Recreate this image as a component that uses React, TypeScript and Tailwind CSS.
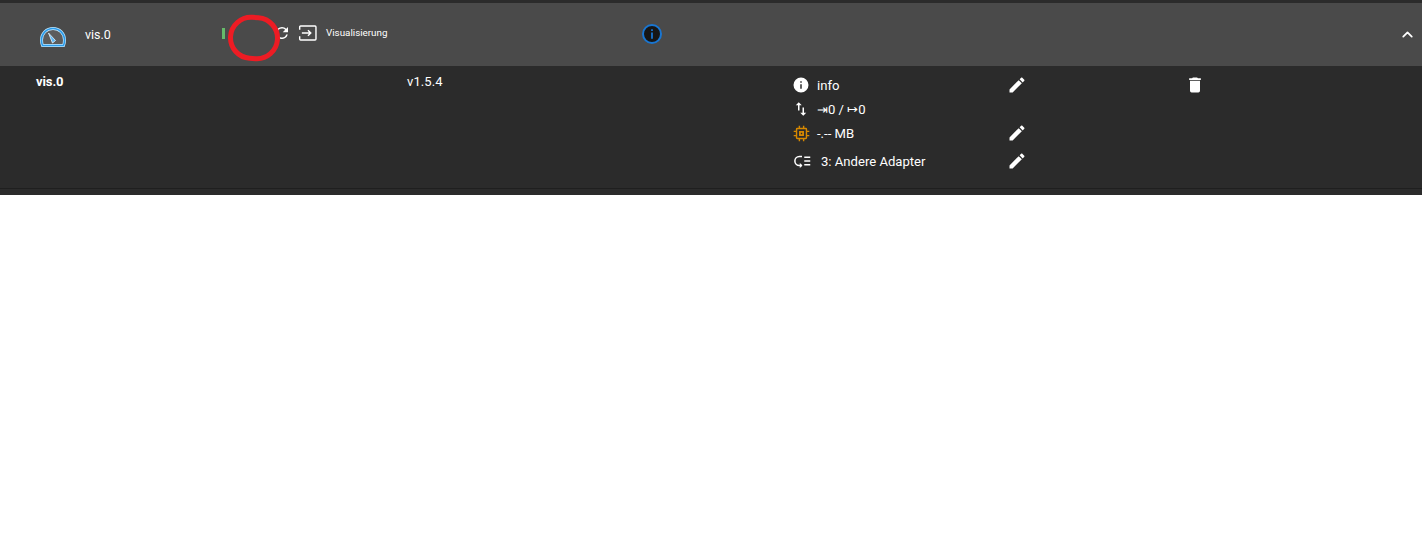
import React from 'react';
import { ChevronUp } from 'lucide-react';

const mdi = {
  info: 'M13 9h-2V7h2m0 10h-2v-6h2m-1-9A10 10 0 0 0 2 12a10 10 0 0 0 10 10 10 10 0 0 0 10-10A10 10 0 0 0 12 2Z',
  pencil: 'M20.71 7.04c.39-.39.39-1.04 0-1.41l-2.34-2.34c-.37-.39-1.02-.39-1.41 0l-1.84 1.83 3.75 3.75M3 17.25V21h3.75L17.81 9.93l-3.75-3.75L3 17.25Z',
  trash: 'M19 4h-3.5l-1-1h-5l-1 1H5v2h14M6 19a2 2 0 0 0 2 2h8a2 2 0 0 0 2-2V7H6v12Z',
  swap: 'M9 3 5 7h3v7h2V7h3L9 3Zm7 14v-7h-2v7h-3l4 4 4-4h-3Z',
  chip: 'M6 4h12a2 2 0 0 1 2 2v12a2 2 0 0 1-2 2H6a2 2 0 0 1-2-2V6a2 2 0 0 1 2-2Zm0 2.500v11a.5.5 0 0 0 .5.5h11a.5.5 0 0 0 .5-.5v-11a.5.5 0 0 0-.5-.5h-11a.5.5 0 0 0-.5.5ZM8.500 8.500h7v7h-7v-7Zm2.500 2.500v2h2v-2h-2ZM8 1h2v3H8V1Zm6 0h2v3h-2V1ZM8 20h2v3H8v-3Zm6 0h2v3h-2v-3ZM1 8h3v2H1V8Zm0 6h3v2H1v-2Zm19-6h3v2h-3V8Zm0 6h3v2h-3v-2Z',
  sync: 'M17.65 6.35A7.96 7.96 0 0 0 12 4a8 8 0 1 0 7.73 10h-2.08A6 6 0 1 1 12 6c1.66 0 3.14.69 4.22 1.78L13 11h7V4l-2.35 2.35Z',
};

const Icon = ({ d, className }: { d: string; className: string }) => (
  <svg viewBox="0 0 24 24" fill="currentColor" className={className}>
    <path d={d} />
  </svg>
);

const Gauge = () => (
  <svg viewBox="0 0 26 20" className="w-[26px] h-5" fill="none">
    <path d="M2.500 18.500h21c1-2 1-4 1-5.500C24.500 6.500 19.500 1.500 13 1.500S1.500 6.500 1.500 13c0 1.500 0 3.500 1 5.500Z" stroke="#bfe6fd" strokeWidth="3" />
    <path d="M2.500 18.500h21c1-2 1-4 1-5.500C24.500 6.500 19.500 1.500 13 1.500S1.500 6.500 1.500 13c0 1.500 0 3.500 1 5.500Z" fill="#ffffff" fillOpacity="0.1" stroke="#2b9bea" strokeWidth="1.600" />
    <path d="M8.500 6l7 7.500-3 2.500Z" fill="#5db6f2" stroke="#e6f5ff" strokeWidth="0.800" />
  </svg>
);

const Exit = () => (
  <svg viewBox="0 0 20 17" className="w-[19px] h-4" fill="none" stroke="currentColor" strokeWidth="1.500">
    <path d="M1.700 5V2a1 1 0 0 1 1-1h15.300a1 1 0 0 1 1 1v13a1 1 0 0 1-1 1H2.700a1 1 0 0 1-1-1v-3" />
    <path d="M4 8.500h9.500M10.500 5.500l3 3-3 3" />
  </svg>
);

const Rooms = () => (
  <svg viewBox="0 0 24 24" className="w-[18px] h-[18px] text-white" fill="none" stroke="currentColor" strokeWidth="2">
    <path d="M12 6H8.500a6 6 0 0 0 0 12H12" />
    <path d="M9 20.500 11.500 18 9 15.500" strokeWidth="1.500" />
    <path d="M15 7h8M15 12h8M15 17h8" />
  </svg>
);

function HeaderRow() {
  return (
    <div className="h-[63px] bg-[#4a4a4a] flex items-center text-white">
      <div className="w-[85px] pl-[40px] pt-[4px] shrink-0">
        <Gauge />
      </div>
      <div className="w-[137px] shrink-0 text-[12.5px] pt-px">vis.0</div>
      <div className="w-[52px] shrink-0 flex -mt-[2px]">
        <div className="w-[3px] h-[11px] bg-[#66bb6a]" />
      </div>
      <Icon d={mdi.sync} className="w-[18px] h-[18px] -mt-[3px] -ml-px" />
      <div className="ml-[7px] -mt-[3px] flex">
        <Exit />
      </div>
      <div className="ml-[9px] w-[316px] shrink-0 text-[9.8px] -mt-[3px]">Visualisierung</div>
      <div className="w-5 h-5 rounded-full bg-[#161616] border-2 border-[#1976d2] flex items-center justify-center -mt-[2px]">
        <Icon d="M10.500 4h3v3h-3ZM10.500 9.500h3V20h-3Z" className="w-[14px] h-[14px] text-[#1976d2]" />
      </div>
      <div className="flex-1" />
      <ChevronUp className="w-[17px] h-[17px] mr-[6px] -mt-px" strokeWidth={2.5} />
    </div>
  );
}

function InfoLine({ icon, text, editable, hClass }: { icon: React.ReactNode; text: string; editable?: boolean; hClass: string }) {
  return (
    <div className={`flex items-center ${hClass}`}>
      <div className="w-6 shrink-0 flex justify-start">{icon}</div>
      <div className="w-[190px] shrink-0 text-[13.100px] leading-none pt-px">{text}</div>
      {editable && <Icon d={mdi.pencil} className="w-5 h-5" />}
    </div>
  );
}

function DetailRow() {
  return (
    <div className="h-[122px] bg-[#2b2b2b] flex text-white">
      <div className="w-[407px] shrink-0 pl-[36px] pt-[8px] text-[13px] leading-4 font-bold tracking-[-0.1px]">vis.0</div>
      <div className="w-[386px] shrink-0 pt-[8px] text-[13px] leading-4 tracking-[0.1px]">v1.5.4</div>
      <div className="w-[393px] shrink-0 pt-[7px]">
        <InfoLine hClass="h-6" text="info" editable icon={<Icon d={mdi.info} className="w-[18px] h-[18px] -ml-[1px]" />} />
        <InfoLine hClass="h-6" text="⇥0 / ↦0" icon={<Icon d={mdi.swap} className="w-[18px] h-[18px] -ml-[1px]" />} />
        <InfoLine hClass="h-6" text="-.-- MB" editable icon={<Icon d={mdi.chip} className="w-[17px] h-[17px] text-[#d68800]" />} />
        <div className="flex items-center h-8">
          <div className="w-7 shrink-0">
            <Rooms />
          </div>
          <div className="w-[186px] shrink-0 text-[13.100px] leading-none pt-px">3: Andere Adapter</div>
          <Icon d={mdi.pencil} className="w-5 h-5" />
        </div>
      </div>
      <div className="pt-[9px]">
        <Icon d={mdi.trash} className="w-5 h-5 -ml-px" />
      </div>
    </div>
  );
}

export default function App() {
  return (
    <div className="relative h-[540px] bg-white font-['Roboto',sans-serif] overflow-hidden">
      <div className="h-[3px] bg-[#2b2b2b]" />
      <HeaderRow />
      <DetailRow />
      <div className="h-[7px] bg-[#2b2b2b] border-t border-[#1f1f1f]" />
      {/* Hand-drawn red annotation */}
      <div className="absolute left-[228px] top-[15px] w-[52px] h-[46px] rounded-full border-[5px] border-[#ed1c24] rotate-[4deg]" />
    </div>
  );
}
